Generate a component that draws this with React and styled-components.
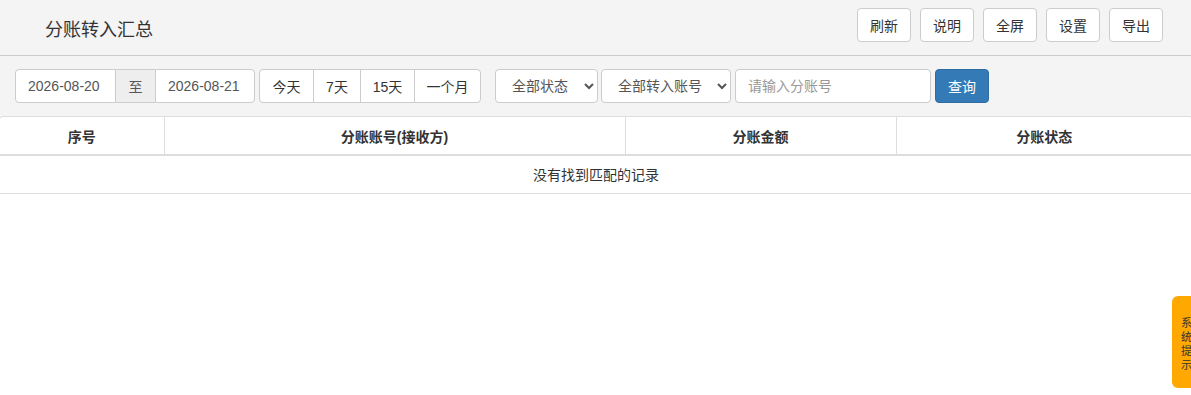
import styled, { createGlobalStyle } from "styled-components";

const GlobalStyle = createGlobalStyle`
  html, body {
    margin: 0;
    padding: 0;
    background: #fff;
  }

  body {
    font-family: "Liberation Sans", "Noto Sans CJK SC", sans-serif;
    font-size: 14px;
    color: #333;
  }

  * {
    box-sizing: border-box;
  }
`;

const headerButtons = ["刷新", "说明", "全屏", "设置", "导出"];
const quickRanges = [
  { label: "今天", width: 55 },
  { label: "7天", width: 48 },
  { label: "15天", width: 55 },
  { label: "一个月", width: 67 },
];
const columns = [
  { title: "序号", width: 164 },
  { title: "分账账号(接收方)", width: 461 },
  { title: "分账金额", width: 271 },
  { title: "分账状态", width: "auto" },
];

export default function App() {
  return (
    <Page>
      <GlobalStyle />
      <Header>
        <Title>分账转入汇总</Title>
        <HeaderActions>
          {headerButtons.map((label) => (
            <Button key={label}>{label}</Button>
          ))}
        </HeaderActions>
      </Header>

      <Toolbar>
        <InputGroup>
          <Input $width={101} defaultValue="2026-08-20" $left />
          <Addon>至</Addon>
          <Input $width={100} defaultValue="2026-08-21" $right />
        </InputGroup>
        <ButtonGroup $gap={4}>
          {quickRanges.map((range) => (
            <GroupButton key={range.label} $width={range.width}>
              {range.label}
            </GroupButton>
          ))}
        </ButtonGroup>
        <Select $width={103} $gap={14} defaultValue="all">
          <option value="all">全部状态</option>
        </Select>
        <Select $width={130} $gap={3} defaultValue="all">
          <option value="all">全部转入账号</option>
        </Select>
        <TextInput $width={196} $gap={4} placeholder="请输入分账号" />
        <PrimaryButton>查询</PrimaryButton>
      </Toolbar>

      <TableWrap>
        <Table>
          <colgroup>
            {columns.map((col) => (
              <col key={col.title} style={{ width: col.width }} />
            ))}
          </colgroup>
          <thead>
            <tr>
              {columns.map((col) => (
                <Th key={col.title}>{col.title}</Th>
              ))}
            </tr>
          </thead>
          <tbody>
            <tr>
              <Empty colSpan={columns.length}>没有找到匹配的记录</Empty>
            </tr>
          </tbody>
        </Table>
      </TableWrap>

      <SideTab>
        <SideText>系统提示</SideText>
      </SideTab>
    </Page>
  );
}

const Page = styled.div`
  min-height: 395px;
  background: #fff;
  overflow: hidden;
`;

const Header = styled.header`
  height: 56px;
  background: #f4f4f4;
  border-bottom: 1px solid #ccc;
  display: flex;
  justify-content: space-between;
  align-items: flex-start;
  padding: 8px 28px 0 45px;
`;

const Title = styled.h1`
  margin: 12px 0 0;
  font-size: 18px;
  font-weight: normal;
  line-height: 20px;
  color: #333;
`;

const HeaderActions = styled.div`
  display: flex;
  gap: 9px;
`;

const Button = styled.button`
  width: 54px;
  height: 34px;
  padding: 0;
  background: #fff;
  border: 1px solid #ccc;
  border-radius: 4px;
  font-family: inherit;
  font-size: 14px;
  color: #333;
  cursor: pointer;
`;

const Toolbar = styled.div`
  height: 60px;
  background: #f4f4f4;
  display: flex;
  align-items: flex-start;
  padding: 13px 15px 0;
`;

const InputGroup = styled.div`
  display: flex;
  height: 34px;
`;

const Input = styled.input`
  width: ${(p) => p.$width}px;
  height: 34px;
  padding: 6px 12px;
  border: 1px solid #ccc;
  border-radius: ${(p) => (p.$left ? "4px 0 0 4px" : p.$right ? "0 4px 4px 0" : "0")};
  background: #fff;
  font-family: inherit;
  font-size: 14px;
  color: #555;
  outline: none;
`;

const Addon = styled.span`
  width: 39px;
  height: 34px;
  display: flex;
  align-items: center;
  justify-content: center;
  background: #eee;
  border-top: 1px solid #ccc;
  border-bottom: 1px solid #ccc;
  color: #555;
`;

const ButtonGroup = styled.div`
  display: flex;
  margin-left: ${(p) => p.$gap}px;

  & > button + button {
    margin-left: -1px;
  }

  & > button:first-child {
    border-radius: 4px 0 0 4px;
  }

  & > button:last-child {
    border-radius: 0 4px 4px 0;
  }
`;

const GroupButton = styled.button`
  width: ${(p) => p.$width}px;
  height: 34px;
  padding: 0;
  background: #fff;
  border: 1px solid #ccc;
  border-radius: 0;
  font-family: inherit;
  font-size: 14px;
  color: #333;
`;

const Select = styled.select`
  width: ${(p) => p.$width}px;
  height: 34px;
  margin-left: ${(p) => p.$gap}px;
  padding: 6px 12px;
  background: #fff;
  border: 1px solid #ccc;
  border-radius: 4px;
  font-family: inherit;
  font-size: 14px;
  color: #555;
  outline: none;
`;

const TextInput = styled.input`
  width: ${(p) => p.$width}px;
  height: 34px;
  margin-left: ${(p) => p.$gap}px;
  padding: 6px 12px;
  background: #fff;
  border: 1px solid #ccc;
  border-radius: 4px;
  font-family: inherit;
  font-size: 14px;
  color: #555;
  outline: none;

  &::placeholder {
    color: #999;
  }
`;

const PrimaryButton = styled.button`
  width: 54px;
  height: 34px;
  margin-left: 4px;
  padding: 0;
  background: #337ab7;
  border: 1px solid #2e6da4;
  border-radius: 4px;
  font-family: inherit;
  font-size: 14px;
  color: #fff;
`;

const TableWrap = styled.div`
  border: 1px solid #ddd;
  border-bottom: none;
  border-radius: 4px 4px 0 0;
  margin: 0 -2px 0 -1px;
  background: #fff;
`;

const Table = styled.table`
  width: 100%;
  border-collapse: collapse;
  table-layout: fixed;
`;

const Th = styled.th`
  height: 38px;
  padding: 0 8px;
  border-bottom: 2px solid #ddd;
  border-left: 1px solid #ddd;
  font-size: 14px;
  font-weight: bold;
  color: #333;
  text-align: center;

  &:first-child {
    border-left: none;
  }
`;

const Empty = styled.td`
  height: 38px;
  padding: 0 8px;
  border-bottom: 1px solid #ddd;
  text-align: center;
  color: #333;
`;

const SideTab = styled.div`
  position: fixed;
  top: 296px;
  right: -20px;
  width: 39px;
  height: 92px;
  padding: 19px 0 0 9px;
  background: #ffa800;
  border-radius: 6px;
`;

const SideText = styled.div`
  width: 11px;
  font-family: "Noto Sans CJK SC", sans-serif;
  font-size: 11px;
  line-height: 14px;
  color: #333;
  word-break: break-all;
`;
